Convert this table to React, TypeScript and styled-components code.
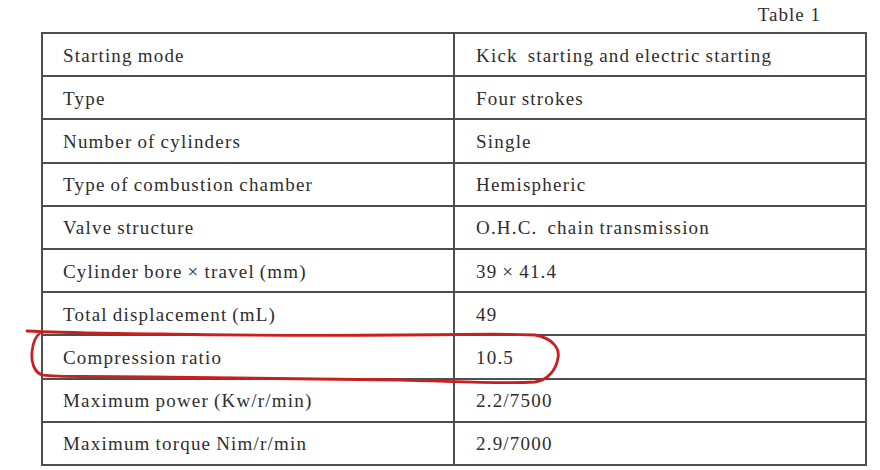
import React from "react";
import styled, { createGlobalStyle } from "styled-components";

const Global = createGlobalStyle`
  html, body { margin: 0; padding: 0; background: #ffffff; }
  body { width: 880px; height: 470px; overflow: hidden; }
`;

const Page = styled.div`
  position: relative;
  width: 880px;
  height: 470px;
  padding: 0 0 0 41px;
  box-sizing: border-box;
  font-family: "Liberation Serif", "Times New Roman", serif;
  color: #2e2e2e;
`;

const Caption = styled.div`
  width: 780px;
  height: 32px;
  display: flex;
  justify-content: flex-end;
  align-items: center;
  font-size: 19px;
  letter-spacing: 1px;
  padding-bottom: 2px;
  box-sizing: border-box;
`;

const Table = styled.table`
  width: 826px;
  border-collapse: collapse;
  table-layout: fixed;
  border: 2px solid #5a5a5a;
`;

const Col = styled.col<{ $w?: number }>`
  width: ${(p) => (p.$w ? `${p.$w}px` : "auto")};
`;

const Row = styled.tr`
  height: 43.2px;
`;

const Cell = styled.td<{ $first?: boolean }>`
  border: 2px solid #4e4e4e;
  padding: 2px 0 0 ${(p) => (p.$first ? "20px" : "21px")};
  font-size: 19px;
  letter-spacing: 1.2px;
  word-spacing: -1px;
  white-space: pre;
  vertical-align: middle;
  color: #2e2e2e;
`;

const Marker = styled.svg`
  position: absolute;
  left: 0;
  top: 0;
  pointer-events: none;
`;

const rows: [string, string][] = [
  ["Starting mode", "Kick  starting and electric starting"],
  ["Type", "Four strokes"],
  ["Number of cylinders", "Single"],
  ["Type of combustion chamber", "Hemispheric"],
  ["Valve structure", "O.H.C.  chain transmission"],
  ["Cylinder bore \u00d7 travel (mm)", "39 \u00d7 41.4"],
  ["Total displacement (mL)", "49"],
  ["Compression ratio", "10.5"],
  ["Maximum power (Kw/r/min)", "2.2/7500"],
  ["Maximum torque Nim/r/min", "2.9/7000"],
];

export default function App() {
  return (
    <>
      <Global />
      <Page>
        <Caption>Table 1</Caption>
        <Table>
          <colgroup>
            <Col $w={412} />
            <Col />
          </colgroup>
          <tbody>
            {rows.map(([k, v]) => (
              <Row key={k}>
                <Cell $first>{k}</Cell>
                <Cell>{v}</Cell>
              </Row>
            ))}
          </tbody>
        </Table>
        <Marker width="880" height="470" viewBox="0 0 880 470">
          <path
            d="M27 331 C 60 333, 100 333, 160 334 S 300 336, 400 335 S 500 334, 535 335 C 552 338, 560 348, 558 358 C 556 370, 548 380, 535 382 C 500 384, 450 381, 400 380 S 250 378, 150 377 S 60 377, 42 375 C 34 372, 31 362, 32 352 C 33 342, 36 336, 40 333"
            fill="none"
            stroke="#c8201e"
            strokeWidth="2.8"
            strokeLinecap="round"
            strokeLinejoin="round"
          />
        </Marker>
      </Page>
    </>
  );
}
